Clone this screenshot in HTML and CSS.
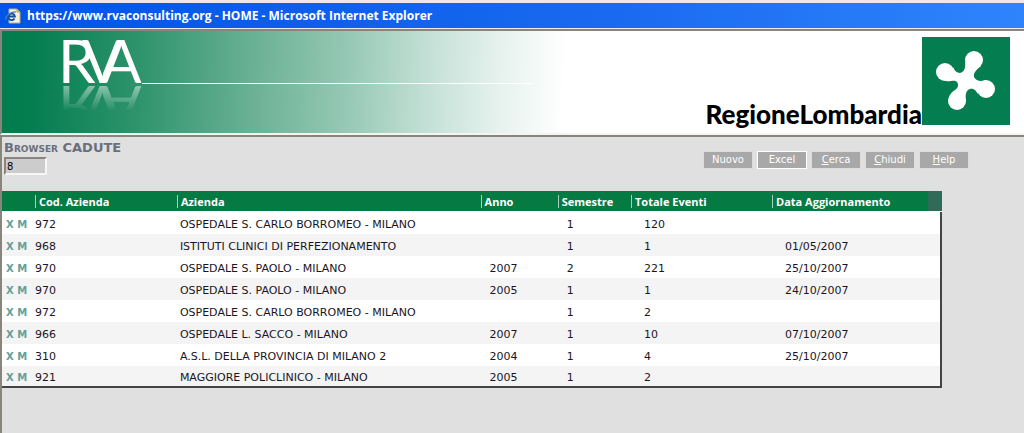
FILE: index.html
```html
<!DOCTYPE html>
<html lang="it">
<head>
<meta charset="utf-8">
<title>HOME</title>
<link rel="stylesheet" href="styles.css">
</head>
<body>
<header class="titlebar">
  <svg class="page-icon" viewBox="0 0 16 16" aria-hidden="true">
    <path d="M4 1h8l3 3v11H4z" fill="#f4f1df" stroke="#b9b18c"/>
    <path d="M12 1v3h3" fill="#e2c46c" stroke="#b9963c"/>
    <path d="M9.500 10.500A3.300 3.300 0 1 1 9.900 8.500H4" fill="none" stroke="#164a9c" stroke-width="1.800"/>
    <path d="M1 12C-.5 9 5 3.500 11 4" fill="none" stroke="#3a7bd8" stroke-width="1.200"/>
  </svg>
  <span class="titlebar-text">https://www.rvaconsulting.org - HOME - Microsoft Internet Explorer</span>
</header>
<div class="banner">
  <svg class="rva" width="530" height="102" viewBox="0 0 530 102" role="img" aria-label="RVA">
    <defs>
      <linearGradient id="fade" x1="0" y1="54" x2="0" y2="80" gradientUnits="userSpaceOnUse">
        <stop offset="0" stop-color="#fff" stop-opacity=".5"/>
        <stop offset="1" stop-color="#fff" stop-opacity="0"/>
      </linearGradient>
      <mask id="mirror-mask" maskUnits="userSpaceOnUse" x="0" y="54" width="530" height="48">
        <rect y="54" width="530" height="48" fill="url(#fade)"/>
      </mask>
    </defs>
    <text class="rva-text" y="52"><tspan x="56">R</tspan><tspan x="80">V</tspan><tspan x="99">A</tspan></text>
    <rect x="140" y="52" width="390" height="1" fill="#fff"/>
    <g mask="url(#mirror-mask)" aria-hidden="true">
      <g transform="matrix(1 0 0 -1 0 107)">
        <text class="rva-text" y="52"><tspan x="56">R</tspan><tspan x="80">V</tspan><tspan x="99">A</tspan></text>
      </g>
    </g>
  </svg>
  <div class="region">
    <span class="region-name">RegioneLombardia</span>
    <svg class="region-mark" viewBox="0 0 88 88" aria-hidden="true">
      <rect width="88" height="88" fill="#047d50"/>
      <g fill="#fff">
        <circle cx="52" cy="23" r="9"/><circle cx="23" cy="35" r="9"/>
        <circle cx="64" cy="52" r="9"/><circle cx="35" cy="64" r="9"/>
        <path d="M43 25C44 31 42 35 38 36C35 36 32 33 31 30L24 44C28 45 33 42 35 45C37 48 36 51 33 53C30 55 27 58 27 61L44 65C43 58 44 53 48 52C52 51 54 54 56 57L64 43C59 45 54 44 52 40C51 36 55 32 59 29Z"/>
      </g>
    </svg>
  </div>
</div>
<main class="content">
  <div class="toolbar">
    <div class="heading">
      <h1><label for="count">Browser CADUTE</label></h1>
      <input id="count" class="count" type="text" value="8">
    </div>
    <div class="actions">
      <button type="button">Nuovo</button>
      <button type="button" class="active">Excel</button>
      <button type="button"><u>C</u>erca</button>
      <button type="button"><u>C</u>hiudi</button>
      <button type="button"><u>H</u>elp</button>
    </div>
  </div>
  <table class="grid">
    <colgroup><col class="c-act"><col class="c-cod"><col class="c-az"><col class="c-anno"><col class="c-sem"><col class="c-tot"><col class="c-data"><col class="c-end"></colgroup>
    <thead>
      <tr><th></th><th><span>Cod. Azienda</span></th><th><span>Azienda</span></th><th><span>Anno</span></th><th><span>Semestre</span></th><th><span>Totale Eventi</span></th><th><span>Data Aggiornamento</span></th><th class="end"></th></tr>
    </thead>
    <tbody>
      <tr><td class="act"><a href="#">X</a> <a href="#">M</a></td><td class="cod">972</td><td class="az">OSPEDALE S. CARLO BORROMEO - MILANO</td><td></td><td>1</td><td class="wide">120</td><td class="wide"></td><td></td></tr>
      <tr><td class="act"><a href="#">X</a> <a href="#">M</a></td><td class="cod">968</td><td class="az">ISTITUTI CLINICI DI PERFEZIONAMENTO</td><td></td><td>1</td><td class="wide">1</td><td class="wide">01/05/2007</td><td></td></tr>
      <tr><td class="act"><a href="#">X</a> <a href="#">M</a></td><td class="cod">970</td><td class="az">OSPEDALE S. PAOLO - MILANO</td><td>2007</td><td>2</td><td class="wide">221</td><td class="wide">25/10/2007</td><td></td></tr>
      <tr><td class="act"><a href="#">X</a> <a href="#">M</a></td><td class="cod">970</td><td class="az">OSPEDALE S. PAOLO - MILANO</td><td>2005</td><td>1</td><td class="wide">1</td><td class="wide">24/10/2007</td><td></td></tr>
      <tr><td class="act"><a href="#">X</a> <a href="#">M</a></td><td class="cod">972</td><td class="az">OSPEDALE S. CARLO BORROMEO - MILANO</td><td></td><td>1</td><td class="wide">2</td><td class="wide"></td><td></td></tr>
      <tr><td class="act"><a href="#">X</a> <a href="#">M</a></td><td class="cod">966</td><td class="az">OSPEDALE L. SACCO - MILANO</td><td>2007</td><td>1</td><td class="wide">10</td><td class="wide">07/10/2007</td><td></td></tr>
      <tr><td class="act"><a href="#">X</a> <a href="#">M</a></td><td class="cod">310</td><td class="az">A.S.L. DELLA PROVINCIA DI MILANO 2</td><td>2004</td><td>1</td><td class="wide">4</td><td class="wide">25/10/2007</td><td></td></tr>
      <tr><td class="act"><a href="#">X</a> <a href="#">M</a></td><td class="cod">921</td><td class="az">MAGGIORE POLICLINICO - MILANO</td><td>2005</td><td>1</td><td class="wide">2</td><td class="wide"></td><td></td></tr>
    </tbody>
  </table>
</main>
</body>
</html>
```
FILE: styles.css
```css
* { box-sizing: border-box; }
body {
  margin: 0;
  min-height: 100vh;
  display: flex;
  flex-direction: column;
  background: #e0e0e0;
  font-family: "DejaVu Sans", Verdana, sans-serif;
  font-size: 11px;
  color: #1c1424;
}
.titlebar {
  display: flex;
  align-items: center;
  gap: 6px;
  height: 29px;
  padding-left: 5px;
  border-top: 3px solid #ece9e4;
  border-bottom: 1px solid #e8eef4;
  background: linear-gradient(90deg, #0054e6, #1a6af0 60%, #2f84fc);
}
.page-icon { width: 16px; height: 16px; }
.titlebar-text {
  font: 700 12px/20px "Open Sans", sans-serif;
  color: #fff;
  white-space: nowrap;
}
.banner {
  display: flex;
  justify-content: space-between;
  height: 106px;
  border: solid #8a857c;
  border-width: 2px 0 0 2px;
  border-bottom: 2px solid #f4f4f0;
  background: linear-gradient(92deg, #037c4e 0, #047d50 30px, #2f946d 140px, #69b094 250px, #98c9b6 350px, #c5e1d7 430px, #e6f2ee 500px, #fff 565px);
}
.rva { flex: none; overflow: visible; }
.rva-text { font: 400 60px Lato, sans-serif; fill: #fff; }
.region { display: flex; align-items: flex-end; padding: 0 14px 8px 0; }
.region-name { font: 900 26px/22px Lato, sans-serif; color: #000; }
.region-mark { width: 88px; height: 88px; }
.content {
  flex: 1;
  border-top: 2px solid #8a857c;
  border-left: 2px solid #8a857c;
}
.toolbar { display: flex; justify-content: space-between; height: 54px; padding-right: 55px; }
.heading { padding: 1px 2px; }
h1 { margin: 0; font-size: 13px; line-height: 19px; font-variant: small-caps; color: #6a6f7c; }
.count {
  display: block;
  width: 43px;
  height: 18px;
  padding: 0 1px;
  border: 2px solid #8a857c;
  border-right-color: #f6f6f4;
  border-bottom-color: #f6f6f4;
  background: #ccc;
  font: 10px "DejaVu Sans", sans-serif;
}
.actions { display: flex; align-items: flex-start; gap: 4px; padding-top: 14px; }
.actions button {
  width: 50px;
  height: 18px;
  padding: 0;
  border: 1px solid #dcdcd8;
  background: #a8a8a8;
  color: #fff;
  font: 10px/14px "DejaVu Sans", sans-serif;
}
.actions .active { border-color: #fff; }
.grid {
  width: 92%;
  table-layout: fixed;
  border-collapse: separate;
  border-spacing: 0;
}
.c-act { width: 3.5%; }
.c-cod { width: 15.1%; }
.c-az { width: 32.3%; }
.c-anno { width: 8.2%; }
.c-sem { width: 7.8%; }
.c-tot { width: 15%; }
.c-data { width: 16.6%; }
.c-end { width: 1.5%; }
th {
  height: 21px;
  padding: 0;
  border-bottom: 1px solid #fff;
  background: #067a43;
  color: #fff;
  font: 700 11px/13px "Open Sans", sans-serif;
  text-align: left;
  white-space: nowrap;
}
th span { display: block; padding-left: 3px; border-left: 1px solid #a6d2bc; }
th.end { background: #2f6b58; }
td { height: 22px; padding: 2px 0 0 9px; background: #fff; white-space: nowrap; }
tr:nth-child(even) td { background: #f4f4f4; }
td.act { padding-left: 4px; font-size: 10px; font-weight: 700; }
.act a { color: #64a09a; text-decoration: none; }
td.cod { padding-left: 0; }
td.az { padding-left: 3px; }
td.wide { padding-left: 13px; }
td:last-child { border-right: 2px solid #444; }
tbody tr:last-child td { border-bottom: 2px solid #444; }
```
